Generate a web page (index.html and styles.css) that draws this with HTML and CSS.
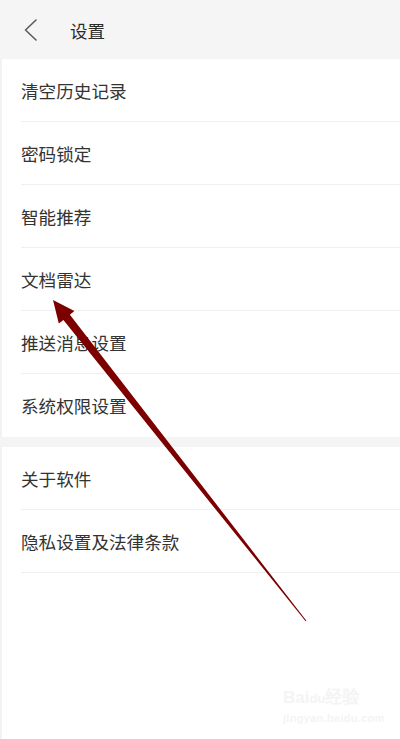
FILE: index.html
```html
<!DOCTYPE html>
<html lang="zh-CN">
<head>
  <meta charset="UTF-8">
  <title>设置</title>
  <link rel="stylesheet" href="styles.css">
</head>
<body>
  <!-- Barra superior -->
  <header class="topbar">
    <svg class="back" width="14" height="22" viewBox="0 0 14 22">
      <polyline points="12,1 1.5,11 12,21" fill="none" stroke="#5c5c5c" stroke-width="1.6" stroke-linejoin="round" stroke-linecap="round"/>
    </svg>
    <span class="title">设置</span>
  </header>

  <main class="page">
    <ul class="group">
      <li class="item">清空历史记录</li>
      <li class="item">密码锁定</li>
      <li class="item">智能推荐</li>
      <li class="item">文档雷达</li>
      <li class="item">推送消息设置</li>
      <li class="item">系统权限设置</li>
    </ul>
    <div class="divider"></div>
    <ul class="group">
      <li class="item">关于软件</li>
      <li class="item last">隐私设置及法律条款</li>
    </ul>
  </main>

  <!-- Seta de destaque sobre a lista -->
  <svg class="arrow" width="400" height="739" viewBox="0 0 400 739">
    <polygon points="53,300 74.4,311.1 69.9,314.8 306.4,620.7 305.6,621.3 63.4,319.9 58.8,323.5" fill="#7d0000"/>
  </svg>

  <div class="watermark">
    <div class="wm-logo">Bai<span class="paw">du</span>经验</div>
    <div class="wm-url">jingyan.baidu.com</div>
  </div>
</body>
</html>
```
FILE: styles.css
```css
/* Reset básico */
* {
  box-sizing: border-box;
  margin: 0;
  padding: 0;
}

body {
  width: 400px;
  height: 739px;
  overflow: hidden;
  position: relative;
  background: #ffffff;
  font-family: "Noto Sans CJK SC", "Noto Sans", sans-serif;
  color: #333333;
}

/* Barra superior */
.topbar {
  height: 59px;
  background: #f5f5f5;
  display: flex;
  align-items: center;
  padding-left: 24px;
}

.back {
  display: block;
  margin-right: 32px;
}

.title {
  font-size: 17.5px;
  color: #2b2b2b;
  margin-top: 1px;
}

.page {
  min-height: 680px;
  border-left: 2px solid #f2f2f2;
}

.group {
  list-style: none;
}

.item {
  height: 63px;
  margin-left: 19px;
  display: flex;
  align-items: center;
  font-size: 17.6px;
  border-bottom: 1px solid #f0f0f0;
}

.group:first-child .item:last-child {
  border-bottom: none;
}

.divider {
  height: 10px;
  background: #f4f4f4;
  margin-left: -2px;
}

/* Seta */
.arrow {
  position: absolute;
  top: 0;
  left: 0;
  pointer-events: none;
}

/* Marca d'água */
.watermark {
  position: absolute;
  left: 283px;
  top: 688px;
  color: #f4f4f4;
  font-family: "Liberation Sans", sans-serif;
  font-weight: 700;
}

.wm-logo {
  font-size: 17px;
  line-height: 20px;
}

.paw {
  font-size: 13px;
}

.wm-url {
  font-size: 11px;
  margin-top: 3px;
  letter-spacing: 0.3px;
}
```
